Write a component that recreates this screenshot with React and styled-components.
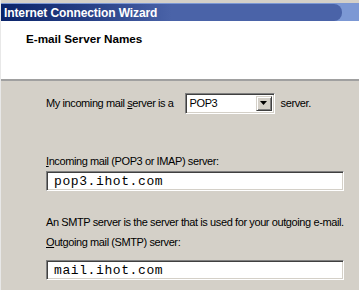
import styled, { createGlobalStyle } from "styled-components";

const GlobalStyle = createGlobalStyle`
  html, body {
    margin: 0;
    padding: 0;
    background: #d4d0c8;
  }
  body {
    font-family: "Liberation Sans", Arial, sans-serif;
    font-size: 11px;
    letter-spacing: -0.4px;
    color: #000;
  }
`;

export default function App() {
  return (
    <>
      <GlobalStyle />
      <Window>
        <TitleBar>
          <TitleFill>Internet Connection Wizard</TitleFill>
        </TitleBar>

        <Header>
          <HeaderTitle>E-mail Server Names</HeaderTitle>
        </Header>

        <Body>
          <ServerRow>
            <span>
              My incoming mail <u>s</u>erver is a
            </span>
            <Combo>
              <ComboValue>POP3</ComboValue>
              <DropButton>
                <svg width="7" height="4" viewBox="0 0 7 4">
                  <path d="M0 0h7L3.5 4z" fill="#000" />
                </svg>
              </DropButton>
            </Combo>
            <span>server.</span>
          </ServerRow>

          <Label $top={42}>
            <u>I</u>ncoming mail (POP3 or IMAP) server:
          </Label>
          <TextField $top={3}>pop3.ihot.com</TextField>

          <Note>An SMTP server is the server that is used for your outgoing e-mail.</Note>

          <Label $top={7}>
            <u>O</u>utgoing mail (SMTP) server:
          </Label>
          <TextField $top={11}>mail.ihot.com</TextField>
        </Body>
      </Window>
    </>
  );
}

const Window = styled.div`
  width: 359px;
  height: 290px;
  overflow: hidden;
  display: flex;
  flex-direction: column;
  padding-top: 3px;
  box-sizing: border-box;
  border-left: 1px solid #e8e8e8;
  background: #d4d0c8;
`;

const TitleBar = styled.div`
  height: 17px;
  display: flex;
  padding: 1px 17px 0 0;
  background: #7c98d4;
`;

const TitleFill = styled.div`
  flex: 1;
  display: flex;
  align-items: center;
  padding-left: 3px;
  color: #fff;
  font-weight: bold;
  font-size: 12px;
  letter-spacing: -0.1px;
  background: linear-gradient(to right, #0a246a 0%, #263f85 25%, #4a63a8 50%, #4a63a8 100%);
  border-radius: 0 8px 8px 0;
`;

const Header = styled.div`
  height: 60px;
  box-sizing: border-box;
  padding: 11px 0 0 25px;
  background: #fff;
  border-bottom: 2px solid #a0a0a0;
`;

const HeaderTitle = styled.div`
  font-weight: bold;
  font-size: 11.7px;
  letter-spacing: 0;
`;

const Body = styled.div`
  flex: 1;
  display: flex;
  flex-direction: column;
  align-items: flex-start;
  padding: 12px 0 0 45px;
`;

const ServerRow = styled.div`
  display: flex;
  align-items: center;
  height: 20px;
  gap: 6px;
`;

const Combo = styled.div`
  width: 90px;
  height: 21px;
  box-sizing: border-box;
  display: flex;
  align-items: center;
  background: #fff;
  border-top: 1px solid #808080;
  border-left: 1px solid #808080;
  border-bottom: 1px solid #fff;
  border-right: 1px solid #fff;
  box-shadow: inset 1px 1px #404040, inset -1px -1px #d4d0c8;
  padding: 2px;
  margin-left: 5px;
`;

const ComboValue = styled.div`
  flex: 1;
  padding-left: 2px;
  font-size: 11px;
`;

const DropButton = styled.div`
  width: 16px;
  height: 15px;
  box-sizing: border-box;
  display: flex;
  align-items: center;
  justify-content: center;
  background: #d4d0c8;
  border-top: 1px solid #d4d0c8;
  border-left: 1px solid #d4d0c8;
  border-bottom: 1px solid #404040;
  border-right: 1px solid #404040;
  box-shadow: inset 1px 1px #fff, inset -1px -1px #808080;
`;

const Label = styled.div`
  margin-top: ${({ $top }) => $top}px;
  line-height: 13px;
`;

const Note = styled.div`
  margin-top: 25px;
  line-height: 13px;
  white-space: nowrap;
`;

const TextField = styled.div`
  margin-top: ${({ $top }) => $top}px;
  width: 298px;
  height: 20px;
  box-sizing: border-box;
  display: flex;
  align-items: center;
  padding-left: 7px;
  background: #fff;
  border-top: 1px solid #808080;
  border-left: 1px solid #808080;
  border-bottom: 1px solid #fff;
  border-right: 1px solid #fff;
  box-shadow: inset 1px 1px #404040, inset -1px -1px #d4d0c8;
  font-family: "Liberation Mono", "Courier New", monospace;
  font-size: 13px;
  letter-spacing: 0.6px;
`;
